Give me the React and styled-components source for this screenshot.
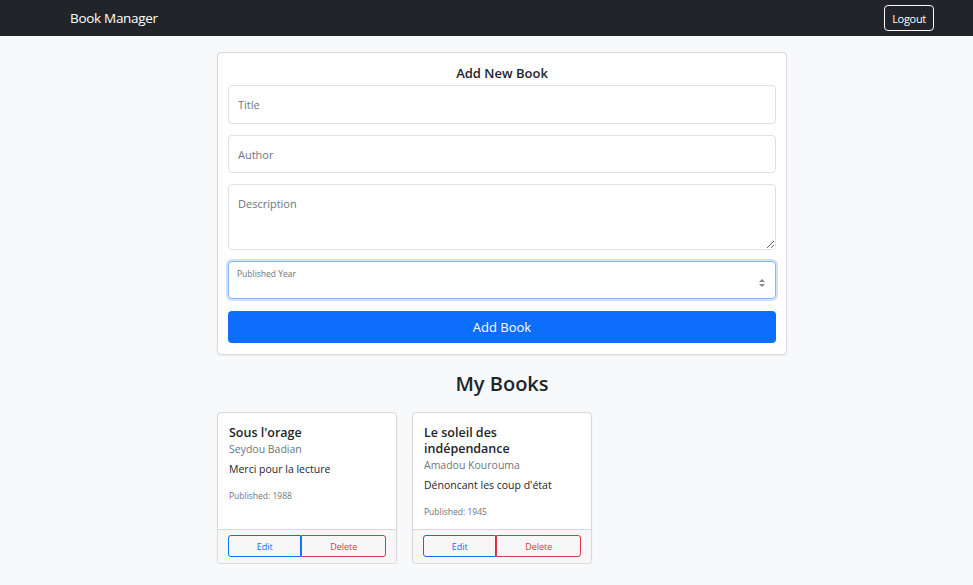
import React from 'react'
import styled, { createGlobalStyle } from 'styled-components'

const GlobalStyle = createGlobalStyle`
  * { box-sizing: border-box; }
  body {
    margin: 0;
    background: #f8f9fa;
    font-family: "Open Sans", "Noto Sans", sans-serif;
    color: #212529;
  }
`

const NavBar = styled.nav`
  height: 36px;
  background: #212529;
  display: flex;
  align-items: center;
  justify-content: space-between;
  padding: 0 39px 0 70px;
`

const Brand = styled.span`
  color: #fff;
  font-size: 13.5px;
  letter-spacing: -0.3px;
`

const LogoutBtn = styled.button`
  background: transparent;
  color: #fff;
  border: 1px solid #f8f9fa;
  border-radius: 4px;
  height: 26px;
  padding: 0 7px;
  font-family: inherit;
  font-size: 11px;
  letter-spacing: -0.3px;
`

const Main = styled.main`
  width: 570px;
  margin: 16px 0 0 217px;
`

const FormCard = styled.form`
  background: #fff;
  border: 1px solid #d6d8db;
  border-radius: 4px;
  box-shadow: 0 1px 2px rgba(0, 0, 0, 0.06);
  padding: 11px 10px;
  display: flex;
  flex-direction: column;
  gap: 11px;
`

const FormTitle = styled.h5`
  margin: 0 0 -8px;
  text-align: center;
  font-size: 13px;
  font-weight: 600;
  line-height: 18px;
`

const Input = styled.input`
  width: 100%;
  height: ${p => p.$h || 38}px;
  border: 1px solid #dee2e6;
  border-radius: 4px;
  padding: 0 9px;
  font-family: inherit;
  font-size: 11px;
  color: #212529;
  background: #fff;
  outline: none;
  &::placeholder { color: #6c757d; }
`

const TextArea = styled.textarea`
  width: 100%;
  height: 66px;
  border: 1px solid #dee2e6;
  border-radius: 4px;
  padding: 11px 9px;
  font-family: inherit;
  font-size: 11px;
  resize: vertical;
  outline: none;
  display: block;
  &::placeholder { color: #6c757d; }
`

const Floating = styled.div`
  position: relative;
  height: 38px;
  border: 1px solid #86b7fe;
  border-radius: 4px;
  box-shadow: 0 0 0 2px rgba(13, 110, 253, 0.2);
  background: #fff;
`

const FloatLabel = styled.label`
  position: absolute;
  left: 8px;
  top: 6px;
  font-size: 8.5px;
  color: #6c757d;
`

const Spinner = styled.div`
  position: absolute;
  right: 10px;
  top: 17px;
  display: flex;
  flex-direction: column;
  gap: 2px;
`

const Arrow = styled.span`
  width: 0;
  height: 0;
  border-left: 3px solid transparent;
  border-right: 3px solid transparent;
  ${p => (p.$up ? 'border-bottom: 3px solid #888;' : 'border-top: 3px solid #888;')}
`

const PrimaryBtn = styled.button`
  height: 32px;
  border: none;
  border-radius: 4px;
  background: #0d6efd;
  color: #fff;
  font-family: inherit;
  font-size: 13px;
  margin-top: 1px;
`

const SectionTitle = styled.h2`
  margin: 16px 0 15px;
  text-align: center;
  font-size: 20px;
  font-weight: 600;
  line-height: 26px;
`

const BookGrid = styled.div`
  display: flex;
  gap: 15px;
  align-items: stretch;
`

const BookCard = styled.div`
  width: 180px;
  background: #fff;
  border: 1px solid #d6d8db;
  border-radius: 4px;
  box-shadow: 0 1px 2px rgba(0, 0, 0, 0.06);
  display: flex;
  flex-direction: column;
  overflow: hidden;
`

const CardBody = styled.div`
  flex: 1;
  padding: 12px 11px 12px 11px;
`

const BookTitle = styled.h5`
  margin: 0;
  font-size: 12.5px;
  font-weight: 600;
  line-height: 16px;
`

const BookAuthor = styled.div`
  font-size: 10.5px;
  color: #6c757d;
  line-height: 16px;
`

const BookDesc = styled.p`
  margin: 4px 0 0;
  font-size: 10.5px;
  line-height: 16px;
`

const BookYear = styled.small`
  display: block;
  margin-top: 13px;
  font-size: 8.5px;
  color: #6c757d;
`

const CardFooter = styled.div`
  border-top: 1px solid #d6d8db;
  background: #f7f7f7;
  padding: 5px 10px 6px;
  display: flex;
`

const GroupBtn = styled.button`
  flex: 1 1 auto;
  height: 22px;
  background: transparent;
  font-family: inherit;
  font-size: 9px;
  border: 1px solid ${p => p.$color};
  color: ${p => p.$color};
  border-radius: ${p => (p.$first ? '3px 0 0 3px' : '0 3px 3px 0')};
  padding: 0 12px;
`

const books = [
  { title: "Sous l'orage", author: 'Seydou Badian', desc: 'Merci pour la lecture', year: 1988 },
  { title: 'Le soleil des indépendance', author: 'Amadou Kourouma', desc: "Dénoncant les coup d'état", year: 1945 },
]

const App = () => {
  return (
    <>
      <GlobalStyle />
      <NavBar>
        <Brand>Book Manager</Brand>
        <LogoutBtn>Logout</LogoutBtn>
      </NavBar>
      <Main>
        <FormCard onSubmit={e => e.preventDefault()}>
          <FormTitle>Add New Book</FormTitle>
          <Input placeholder="Title" $h={39} />
          <Input placeholder="Author" />
          <TextArea placeholder="Description" />
          <Floating>
            <FloatLabel>Published Year</FloatLabel>
            <Spinner>
              <Arrow $up />
              <Arrow />
            </Spinner>
          </Floating>
          <PrimaryBtn type="submit">Add Book</PrimaryBtn>
        </FormCard>

        <SectionTitle>My Books</SectionTitle>
        <BookGrid>
          {books.map(b => (
            <BookCard key={b.title}>
              <CardBody>
                <BookTitle>{b.title}</BookTitle>
                <BookAuthor>{b.author}</BookAuthor>
                <BookDesc>{b.desc}</BookDesc>
                <BookYear>Published: {b.year}</BookYear>
              </CardBody>
              <CardFooter>
                <GroupBtn $first $color="#0d6efd">Edit</GroupBtn>
                <GroupBtn $color="#dc3545">Delete</GroupBtn>
              </CardFooter>
            </BookCard>
          ))}
        </BookGrid>
      </Main>
    </>
  )
}

export default App
